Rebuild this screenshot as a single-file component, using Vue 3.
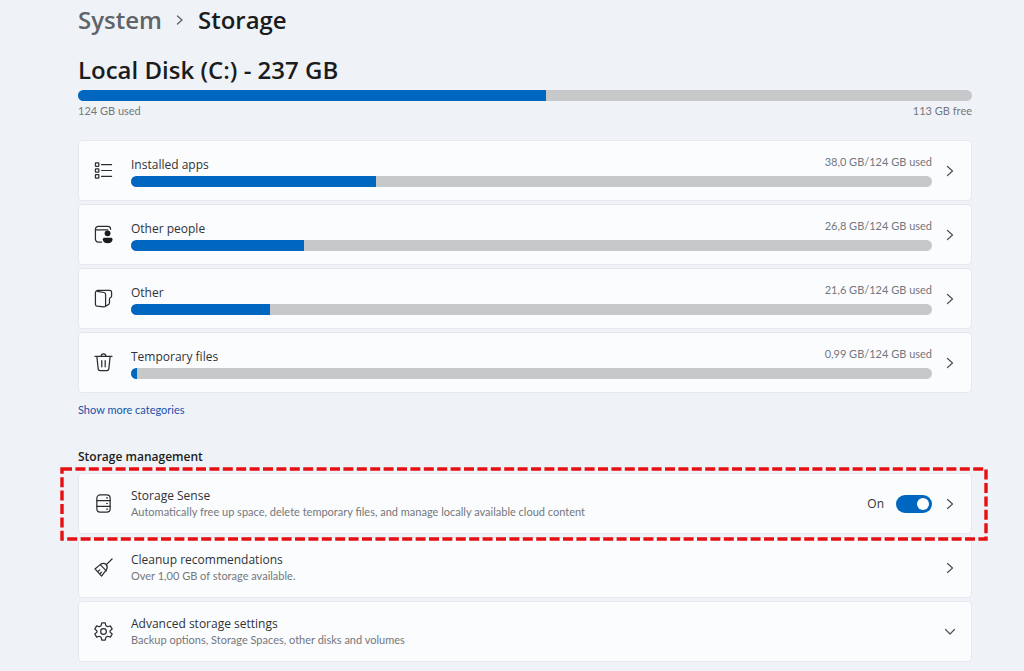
<script setup>
import { ref } from "vue";

const senseOn = ref(true);

const disk = { name: "Local Disk (C:) - 237 GB", used: "124 GB used", free: "113 GB free", percent: 52.4 };

const categories = [
  { id: "apps", name: "Installed apps", used: "38,0 GB/124 GB used", percent: 30.6 },
  { id: "people", name: "Other people", used: "26,8 GB/124 GB used", percent: 21.6 },
  { id: "other", name: "Other", used: "21,6 GB/124 GB used", percent: 17.4 },
  { id: "temp", name: "Temporary files", used: "0,99 GB/124 GB used", percent: 0.8 },
];
</script>

<template>
  <main class="storage-page">
    <nav class="breadcrumb">
      <a href="#system" class="breadcrumb-parent">System</a>
      <svg class="breadcrumb-arrow" viewBox="0 0 8 12"><path d="M1.500 2 6 6l-4.500 4" /></svg>
      <h1 class="breadcrumb-current">Storage</h1>
    </nav>

    <section>
      <h2 class="disk-name">{{ disk.name }}</h2>
      <div class="bar">
        <div class="bar-fill" :style="{ width: disk.percent + '%' }"></div>
      </div>
      <div class="disk-labels">
        <span>{{ disk.used }}</span>
        <span>{{ disk.free }}</span>
      </div>
    </section>

    <section class="card-list category-list">
      <a v-for="item in categories" :key="item.id" class="card" :href="'#' + item.id">
        <svg v-if="item.id === 'apps'" class="card-icon" viewBox="0 0 20 20">
          <rect x="1.500" y="2" width="3.600" height="3.600" rx=".5" />
          <rect x="1.500" y="8.200" width="3.600" height="3.600" rx=".5" />
          <rect x="1.500" y="14.400" width="3.600" height="3.600" rx=".5" />
          <path d="M8 3.800h10.500M8 10h10.500M8 16.200h10.500" />
        </svg>
        <svg v-else-if="item.id === 'people'" class="card-icon" viewBox="0 0 20 20">
          <path d="M8 18H4.500a3 3 0 0 1-3-3V4.500a3 3 0 0 1 3-3h10a3 3 0 0 1 3 3M1.500 5.200h13" />
          <circle class="solid" cx="14.300" cy="8.800" r="3.100" />
          <path class="solid" d="M9.300 15c0-1 .7-1.700 1.700-1.700h6.800c1 0 1.700.7 1.700 1.700 0 2.800-2 4.300-5.100 4.300S9.300 17.800 9.300 15z" />
        </svg>
        <svg v-else-if="item.id === 'other'" class="card-icon" viewBox="0 0 20 20">
          <path d="M3.500 2.500 10.500 3.700a2 2 0 0 1 1.700 2v11.800a1.400 1.400 0 0 1-1.600 1.400L3.200 18A2 2 0 0 1 1.500 16V4A2.500 2.500 0 0 1 4 1.500h12.500a2 2 0 0 1 2 2v4c0 1.500-2.200 1.500-2.200 3v4.500c0 1.500-1.800 2-4 3" />
        </svg>
        <svg v-else class="card-icon" viewBox="0 0 20 20">
          <path d="M1 3.500h18M7.500 3.500a2.500 2.500 0 0 1 5 0M3 3.500l1.400 13.200a2 2 0 0 0 2 1.800h7.200a2 2 0 0 0 2-1.800L17 3.500M8.200 8v6.500M11.800 8v6.500" />
        </svg>
        <div class="category-content">
          <div class="category-header">
            <span class="category-name">{{ item.name }}</span>
            <span class="category-used">{{ item.used }}</span>
          </div>
          <div class="bar">
            <div class="bar-fill" :style="{ width: item.percent + '%' }"></div>
          </div>
        </div>
        <svg class="chevron" viewBox="0 0 12 12"><path d="M3.500 1.500 8.500 6l-5 4.500" /></svg>
      </a>
    </section>

    <a href="#more" class="more-link">Show more categories</a>

    <h3 class="section-title">Storage management</h3>
    <section class="card-list">
      <div class="card card-marked">
        <svg class="card-icon" viewBox="0 0 20 20">
          <rect x="3" y="1" width="14" height="18" rx="3.500" />
          <path d="M3 7h14M3 13h14M13.300 4.200h.8M13.300 10h.8M13.300 15.800h.8" />
        </svg>
        <div class="setting-text">
          <label for="sense" class="setting-name">Storage Sense</label>
          <span class="setting-note">Automatically free up space, delete temporary files, and manage locally available cloud content</span>
        </div>
        <label for="sense" class="switch-state">{{ senseOn ? "On" : "Off" }}</label>
        <input id="sense" v-model="senseOn" type="checkbox" class="switch" />
        <a href="#sense" class="chevron-link" aria-label="Storage Sense">
          <svg class="chevron" viewBox="0 0 12 12"><path d="M3.500 1.500 8.500 6l-5 4.500" /></svg>
        </a>
        <svg class="marker"><rect x="2" y="2" /></svg>
      </div>

      <a href="#cleanup" class="card">
        <svg class="card-icon" viewBox="0 0 20 20">
          <path d="m19 1-6 6M7.500 6.200c2-1 3.800-.8 5.200.6s1.600 3.200.6 5.200L8 19 1 11.500zM6.500 7l6.500 6.500M4 14.500l2-2M6.200 16.800l1.600-1.800" />
        </svg>
        <div class="setting-text">
          <span class="setting-name">Cleanup recommendations</span>
          <span class="setting-note">Over 1,00 GB of storage available.</span>
        </div>
        <svg class="chevron" viewBox="0 0 12 12"><path d="M3.500 1.500 8.500 6l-5 4.500" /></svg>
      </a>

      <button type="button" class="card">
        <svg class="card-icon" viewBox="0 0 20 20">
          <path d="M8.200 1h3.600l.7 2.900 1.900 1.100 2.800-.9 1.900 3.200-2.200 2v1.400l2.200 2-1.900 3.200-2.800-.9-1.900 1.100-.7 2.900H8.200l-.7-2.900L5.600 15l-2.800.9-1.900-3.200 2.200-2V9.300l-2.200-2 1.900-3.200 2.800.9 1.900-1.100z" />
          <circle cx="10" cy="10" r="3" />
        </svg>
        <div class="setting-text">
          <span class="setting-name">Advanced storage settings</span>
          <span class="setting-note">Backup options, Storage Spaces, other disks and volumes</span>
        </div>
        <svg class="chevron" viewBox="0 0 12 12"><path d="M1.500 3.500 6 8l4.500-4.500" /></svg>
      </button>
    </section>
  </main>
</template>

<style>
body {
  margin: 0;
  background-color: #eff3f8;
}
</style>

<style scoped>
.storage-page {
  box-sizing: border-box;
  min-height: 100vh;
  padding: 0 52px 0 78px;
  font-family: "Open Sans", "Noto Sans", sans-serif;
  color: #303236;
}

a {
  color: inherit;
  text-decoration: none;
}

svg {
  fill: none;
  stroke: #2c2d30;
  stroke-linecap: round;
  stroke-linejoin: round;
}

.breadcrumb {
  display: flex;
  align-items: center;
  height: 40px;
  font-size: 24px;
  font-weight: 600;
  line-height: 32px;
}

.breadcrumb-parent {
  color: #606368;
}

.breadcrumb-arrow {
  width: 8px;
  height: 12px;
  margin: 0 14px;
  stroke: #606368;
  stroke-width: 1.4;
}

.breadcrumb-current {
  margin: 0;
  font-size: inherit;
  font-weight: inherit;
  color: #1b1c20;
}

.disk-name {
  margin: 10px 0 0;
  font-size: 24px;
  font-weight: 600;
  line-height: 40px;
  color: #1b1c20;
}

.bar {
  height: 11px;
  border-radius: 6px;
  background-color: #c7c8ca;
  overflow: hidden;
}

.bar-fill {
  height: 100%;
  background-color: #0067c0;
}

.disk-labels {
  display: flex;
  justify-content: space-between;
  margin-top: 2px;
}

.disk-labels,
.category-used,
.setting-note {
  font-family: Lato, "Open Sans", sans-serif;
  font-size: 11px;
  line-height: 16px;
  color: #74777c;
}

.card-list {
  display: flex;
  flex-direction: column;
  gap: 3px;
}

.category-list {
  margin-top: 21px;
}

.card {
  position: relative;
  display: flex;
  align-items: center;
  box-sizing: border-box;
  width: 100%;
  height: 61px;
  padding: 0 15px;
  border: 1px solid #e5e8ed;
  border-radius: 4px;
  background-color: #fbfcfe;
  font-family: inherit;
  color: inherit;
  text-align: left;
}

.card-icon {
  flex: none;
  width: 19px;
  height: 19px;
  margin-right: 18px;
  stroke-width: 1.3;
}

.solid {
  fill: #1b1c20;
  stroke: none;
}

.category-content {
  flex: 1;
}

.category-header {
  display: flex;
  justify-content: space-between;
  height: 22px;
}

.category-name {
  font-size: 12px;
  line-height: 22px;
}

.chevron {
  display: block;
  flex: none;
  width: 12px;
  height: 12px;
  margin-left: 12px;
  stroke: #505256;
  stroke-width: 1.2;
}

.more-link {
  display: block;
  width: fit-content;
  margin-top: 9px;
  font-family: Lato, "Open Sans", sans-serif;
  font-size: 11px;
  line-height: 16px;
  color: #1a50a8;
}

.section-title {
  margin: 29px 0 6px;
  font-size: 12px;
  font-weight: 600;
  line-height: 20px;
  color: #1b1c20;
}

.setting-text {
  display: flex;
  flex: 1;
  flex-direction: column;
}

.setting-name {
  font-size: 12px;
  line-height: 16px;
}

.switch-state {
  margin-right: 12px;
  font-size: 12px;
}

.switch {
  display: flex;
  align-items: center;
  box-sizing: border-box;
  width: 36px;
  height: 18px;
  margin: 0;
  padding: 0 3px;
  border-radius: 9px;
  background-color: #8a8d91;
  appearance: none;
}

.switch::before {
  content: "";
  width: 12px;
  height: 12px;
  border-radius: 50%;
  background-color: #fff;
}

.switch:checked {
  justify-content: flex-end;
  background-color: #0067c0;
}

.card-marked {
  z-index: 1;
}

.marker {
  position: absolute;
  top: -7px;
  left: -19px;
  width: calc(100% + 36px);
  height: 74px;
  pointer-events: none;
}

.marker rect {
  width: calc(100% - 4px);
  height: 70px;
  stroke: #e60f12;
  stroke-width: 3.4;
  stroke-linecap: butt;
  stroke-linejoin: miter;
  stroke-dasharray: 10 3.4;
}
</style>
